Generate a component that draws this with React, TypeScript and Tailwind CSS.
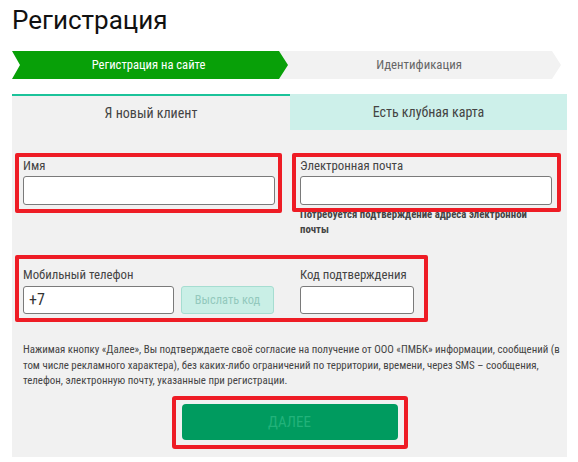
import React from "react";

function Field({ label, w }: { label: string; w: string }) {
  return (
    <div className="flex flex-col">
      <div className="h-[19px] text-[12.8px] leading-[18px] text-[#444]">{label}</div>
      <div className={`h-[29px] ${w} rounded-[3px] border border-[#7a7a7a] bg-white`} />
    </div>
  );
}

export default function App() {
  return (
    <div className="w-[578px] h-[462px] bg-white overflow-hidden font-['Roboto_Condensed','Roboto',sans-serif]">
      <div className="px-[12px] w-[567px]">
        <div className="h-[51px] pt-[3px] font-['Roboto',sans-serif] text-[26px] leading-[34px] text-[#111]">Регистрация</div>
        <div className="flex h-[28px]">
          <div className="relative w-[277px] h-[28px] flex items-center justify-center pl-[2px] text-white text-[12.6px]">
            <svg className="absolute inset-0" width="277" height="28" viewBox="0 0 277 28">
              <polygon points="0,0 269,0 277,14 269,28 0,28 8,14" fill="#08a008" />
            </svg>
            <span className="relative">Регистрация на сайте</span>
          </div>
          <div className="relative ml-[-4px] w-[282px] h-[28px] flex items-center justify-center pl-[4px] text-[#666] text-[12.8px]">
            <svg className="absolute inset-0" width="282" height="28" viewBox="0 0 282 28">
              <polygon points="0,0 273,0 282,14 273,28 0,28 9,14" fill="#f2f2f2" />
            </svg>
            <span className="relative">Идентификация</span>
          </div>
        </div>
        <div className="mt-[15px] flex w-[555px]">
          <div className="w-[278px] h-[36px] border-t-2 border-[#1cc39a] bg-[#f1f1f1] flex items-center justify-center text-[14px] text-[#444]">
            Я новый клиент
          </div>
          <div className="w-[277px] h-[36px] bg-[#cdf0ea] flex items-center justify-center text-[14px] text-[#444]">
            Есть клубная карта
          </div>
        </div>
        <div className="w-[555px] h-[327px] bg-[#f1f1f1] pt-[23px]">
          <div className="flex">
            <div className="ml-[3px] w-[267px] h-[60px] border-4 border-[#ee1c25] rounded-[2px] pl-[4px]">
              <Field label="Имя" w="w-[252px]" />
            </div>
            <div className="ml-[10px] flex flex-col">
              <div className="relative z-10 w-[269px] h-[59px] border-4 border-[#ee1c25] rounded-[2px] pl-[4px]">
                <Field label="Электронная почта" w="w-[252px]" />
              </div>
              <div className="mt-[-5px] pl-[8px] w-[260px] text-[10.8px] leading-[15px] font-bold text-[#444]">
                Потребуется подтверждение адреса электронной почты
              </div>
            </div>
          </div>
          <div className="mt-[18px] ml-[3px] w-[413px] h-[67px] border-4 border-[#ee1c25] rounded-[2px] pl-[4px] pt-[7px] flex">
            <div className="flex flex-col">
              <div className="h-[20px] text-[12.8px] leading-[18px] text-[#444]">Мобильный телефон</div>
              <div className="flex gap-[7px]">
                <div className="h-[28px] w-[151px] rounded-[3px] border border-[#7a7a7a] bg-white flex items-center pl-[5px] text-[16px] text-[#333]">
                  +7
                </div>
                <div className="h-[28px] w-[93px] rounded-[3px] border border-[#a6ddd1] bg-[#c9efe6] flex items-center justify-center text-[12.4px] text-[#93c9bd]">
                  Выслать код
                </div>
              </div>
            </div>
            <div className="ml-[26px] flex flex-col">
              <div className="h-[20px] text-[12.8px] leading-[18px] text-[#444]">Код подтверждения</div>
              <div className="h-[28px] w-[114px] rounded-[3px] border border-[#7a7a7a] bg-white" />
            </div>
          </div>
          <div className="mt-[20px] pl-[11px] text-[10.9px] leading-[15.5px] text-[#444] whitespace-nowrap">
            Нажимая кнопку «Далее», Вы подтверждаете своё согласие на получение от ООО «ПМБК» информации, сообщений (в
            <br />
            том числе рекламного характера), без каких-либо ограничений по территории, времени, через SMS – сообщения,
            <br />
            телефон, электронную почту, указанные при регистрации.
          </div>
          <div className="mt-[7px] flex justify-center">
            <div className="w-[236px] h-[53px] border-4 border-[#ee1c25] rounded-[3px] flex items-center justify-center">
              <div className="w-[216px] h-[36px] rounded-[4px] bg-[#009b5f] flex items-center justify-center text-[15px] text-[#22b27a]">
                ДАЛЕЕ
              </div>
            </div>
          </div>
        </div>
      </div>
    </div>
  );
}
